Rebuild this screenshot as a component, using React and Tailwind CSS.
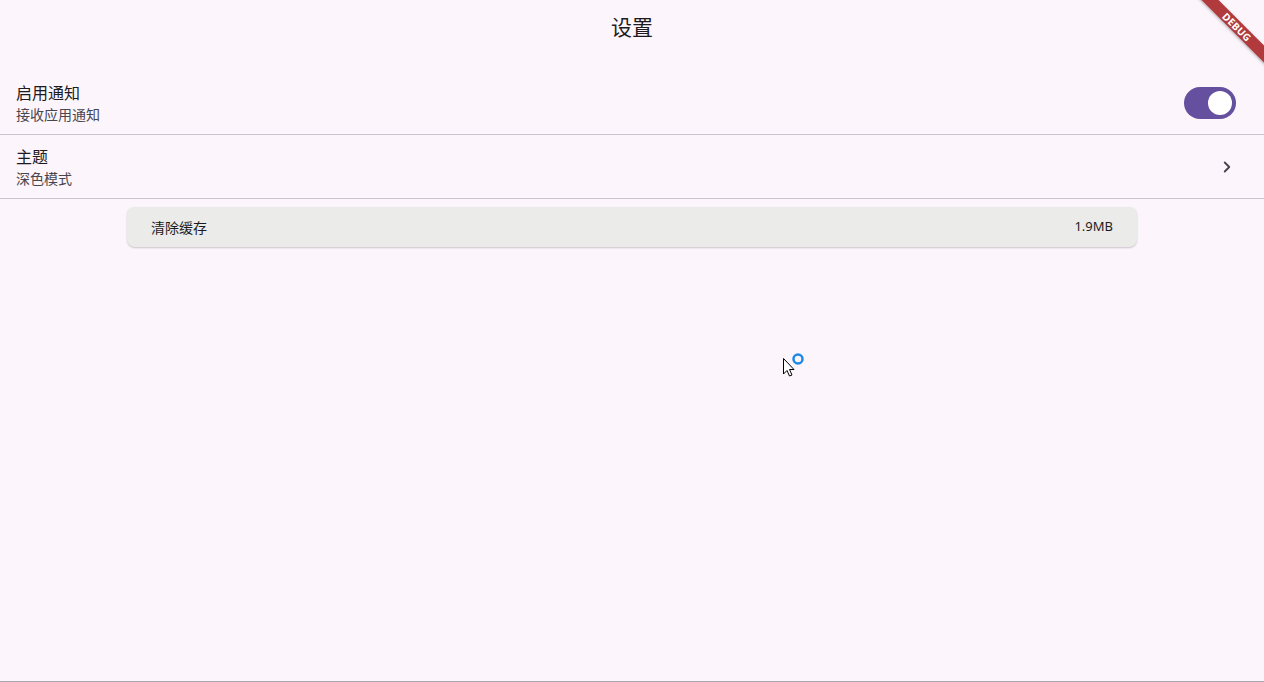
import { ChevronRight } from "lucide-react";

function Toggle() {
  return (
    <div className="flex h-[32px] w-[52px] items-center justify-end rounded-full bg-[#65509f] px-[4px]">
      <div className="h-[24px] w-[24px] rounded-full bg-white" />
    </div>
  );
}

function SettingRow({ title, subtitle, trailing }) {
  return (
    <div className="flex h-[64px] items-center justify-between border-b border-[#cac4cf] pl-[16px] pr-[28px]">
      <div className="flex flex-col pt-[1px]">
        <span className="text-[16px] leading-[22px] text-[#1d1b20]">{title}</span>
        <span className="text-[14px] leading-[21px] text-[#49454f]">{subtitle}</span>
      </div>
      {trailing}
    </div>
  );
}

export default function App() {
  return (
    <div
      className="relative flex h-[682px] w-[1264px] flex-col overflow-hidden border-b border-[#a9a6ab] bg-[#fcf5fc]"
      style={{ fontFamily: '"Noto Sans", "Noto Sans CJK SC", sans-serif' }}
    >
      {/* App bar */}
      <div className="flex h-[56px] items-center justify-center">
        <h1 className="text-[21px] text-[#1d1b20]">设置</h1>
      </div>

      <div className="mt-[15px] flex flex-col">
        <SettingRow title="启用通知" subtitle="接收应用通知" trailing={<Toggle />} />
        <SettingRow
          title="主题"
          subtitle="深色模式"
          trailing={<ChevronRight size={18} strokeWidth={2.5} className="text-[#49454f]" />}
        />
      </div>

      {/* Cache card */}
      <div className="mx-[127px] mt-[8px] flex h-[40px] items-center justify-between rounded-[8px] bg-[#ebebea] px-[24px] shadow-[0_1px_2px_rgba(0,0,0,0.2)]">
        <span className="text-[14px] text-[#1d1b20]">清除缓存</span>
        <span className="text-[13px] text-[#1d1b20]">1.9MB</span>
      </div>

      {/* Debug banner */}
      <div className="absolute right-[-33px] top-[21px] flex h-[12px] w-[120px] rotate-45 items-center justify-center bg-[#b13a3d] text-[10px] font-bold tracking-wide text-white shadow-[0_1px_3px_rgba(0,0,0,0.3)]">
        DEBUG
      </div>

      {/* Cursor */}
      <svg className="absolute left-[782px] top-[352px]" width="26" height="28" viewBox="0 0 26 28">
        <path d="M1.5 6.5 L1.5 22 L5 18.5 L7.5 24 L10 23 L7.5 17.5 L12 17.5 Z" fill="white" stroke="black" strokeWidth="1" />
        <circle cx="16" cy="7" r="4.5" fill="none" stroke="#1e88e5" strokeWidth="2.5" />
      </svg>
    </div>
  );
}
